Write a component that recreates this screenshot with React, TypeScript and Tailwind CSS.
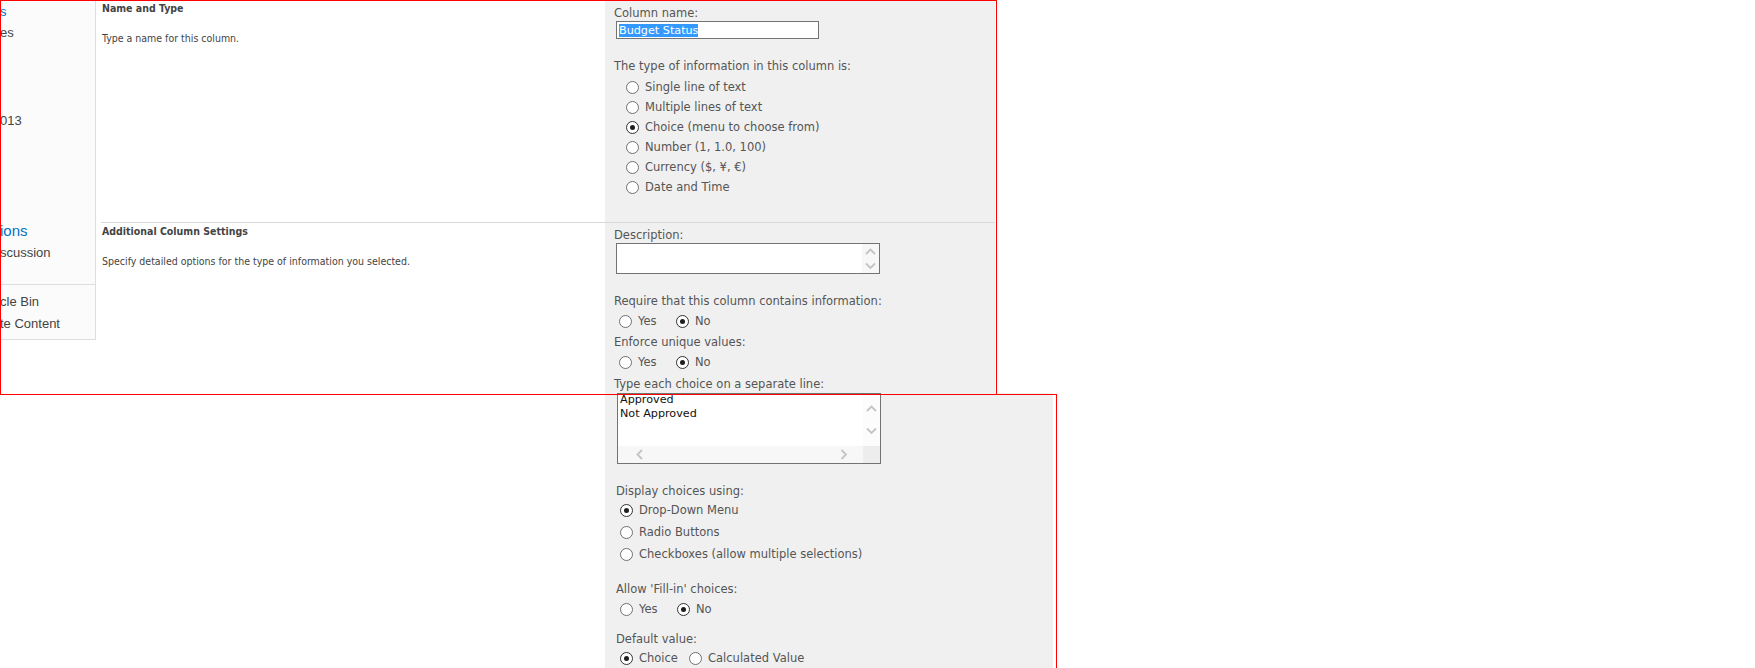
import React from 'react';

const label = "font-['DejaVu_Sans',sans-serif] text-[11.5px] leading-[14px] text-[#555]";
const tahoma = "font-['DejaVu_Sans_Condensed','Liberation_Sans',sans-serif]";

const Radio = ({ checked }: { checked?: boolean }) => (
  <span
    className={
      checked
        ? 'flex h-[13px] w-[13px] shrink-0 items-center justify-center rounded-full border border-[#333] bg-white'
        : 'flex h-[13px] w-[13px] shrink-0 items-center justify-center rounded-full border border-[#707070] bg-white'
    }
  >
    {checked && <span className="h-[5px] w-[5px] rounded-full bg-[#1e1e1e]" />}
  </span>
);

const Chevron = ({ dir }: { dir: 'up' | 'down' | 'left' | 'right' }) => {
  const d = {
    up: 'M1 6 L5.5 1.5 L10 6',
    down: 'M1 1.5 L5.5 6 L10 1.5',
    left: 'M6 1 L1.5 5.5 L6 10',
    right: 'M1.5 1 L6 5.5 L1.5 10',
  }[dir];
  const vertical = dir === 'up' || dir === 'down';
  return (
    <svg width={vertical ? 11 : 8} height={vertical ? 8 : 11} viewBox={vertical ? '0 0 11 8' : '0 0 8 11'}>
      <path d={d} stroke="#c4c4c4" strokeWidth="1.8" fill="none" />
    </svg>
  );
};

// one radio with its text
const Option = ({ text, checked, width }: { text: string; checked?: boolean; width?: string }) => (
  <div className={`flex items-center gap-[6px] ${width ?? ''}`}>
    <Radio checked={checked} />
    <span className={label}>{text}</span>
  </div>
);

const typeOptions = [
  'Single line of text',
  'Multiple lines of text',
  'Choice (menu to choose from)',
  'Number (1, 1.0, 100)',
  'Currency ($, ¥, €)',
  'Date and Time',
];

const NavPanel = () => (
  <div className="flex h-[340px] w-[96px] shrink-0 flex-col overflow-hidden border-r border-b border-[#dedede] bg-[#fbfbfb] font-['Liberation_Sans',sans-serif] text-[13px] leading-[16px] text-[#444]">
    <div className="mt-[4px] text-[#0072c6]">s</div>
    <div className="mt-[5px]">es</div>
    <div className="mt-[72px]">013</div>
    <div className="mt-[93px] text-[15px] leading-[18px] text-[#0072c6]">ions</div>
    <div className="mt-[5px]">scussion</div>
    <div className="mt-[23px] h-px w-full bg-[#dedede]" />
    <div className="mt-[9px]">cle Bin</div>
    <div className="mt-[6px]">te Content</div>
  </div>
);

const DescriptionBox = () => (
  <div className="ml-[2px] mt-[1px] flex h-[31px] w-[264px] border border-[#737373] bg-white">
    <div className="flex-1" />
    <div className="flex w-[17px] flex-col items-center justify-center gap-[6px] bg-[#f7f7f7]">
      <Chevron dir="up" />
      <Chevron dir="down" />
    </div>
  </div>
);

const ChoicesBox = () => (
  <div className="ml-[12px] flex h-[71px] w-[264px] flex-col border border-[#737373] bg-white">
    <div className="flex flex-1">
      <div className="-mt-[1px] flex-1 pl-[2px] font-['DejaVu_Sans',sans-serif] text-[11.2px] leading-[14px] text-[#111]">
        <div>Approved</div>
        <div>Not Approved</div>
      </div>
      <div className="flex w-[17px] flex-col items-center justify-center gap-[14px] bg-[#fcfcfc]">
        <Chevron dir="up" />
        <Chevron dir="down" />
      </div>
    </div>
    <div className="flex h-[17px]">
      <div className="flex flex-1 items-center justify-between bg-[#f7f7f7] pl-[18px] pr-[15px]">
        <Chevron dir="left" />
        <Chevron dir="right" />
      </div>
      <div className="w-[17px] bg-[#ededed]" />
    </div>
  </div>
);

export default function App() {
  return (
    <div className="relative min-h-[668px] w-[1755px] overflow-hidden bg-white">
      {/* first capture */}
      <div className="flex h-[393px] overflow-hidden">
        <NavPanel />
        <div className="ml-[5px] flex w-[894px] flex-col">
          {/* Name and Type */}
          <div className="flex h-[223px] border-b border-[#d8d8d8]">
            <div className={`w-[504px] pl-[1px] ${tahoma} text-[10.5px] leading-[14px] text-[#444]`}>
              <div className="mt-[1px] font-bold">Name and Type</div>
              <div className="mt-[16px]">Type a name for this column.</div>
            </div>
            <div className="flex w-[390px] flex-col bg-[#f0f0f0] pl-[9px]">
              <div className={`mt-[6px] ${label}`}>Column name:</div>
              <div className="ml-[2px] mt-[1px] flex h-[18px] w-[203px] items-center border border-[#737373] bg-white pl-[2px]">
                <span className="bg-[#3399ff] font-['DejaVu_Sans',sans-serif] text-[11.2px] leading-[13px] text-white">
                  Budget Status
                </span>
              </div>
              <div className={`mt-[20px] ${label}`}>The type of information in this column is:</div>
              <div className="mt-[4px] flex flex-col pl-[12px]">
                {typeOptions.map((t, i) => (
                  <div key={t} className="flex h-[20px] items-center">
                    <Option text={t} checked={i === 2} />
                  </div>
                ))}
              </div>
            </div>
          </div>
          {/* Additional Column Settings */}
          <div className="flex flex-1">
            <div className={`w-[504px] pl-[1px] ${tahoma} text-[10.5px] leading-[14px] text-[#444]`}>
              <div className="mt-[1px] font-bold">Additional Column Settings</div>
              <div className="mt-[16px]">Specify detailed options for the type of information you selected.</div>
            </div>
            <div className="flex w-[390px] flex-col bg-[#f0f0f0] pl-[9px]">
              <div className={`mt-[5px] ${label}`}>Description:</div>
              <DescriptionBox />
              <div className={`mt-[20px] ${label}`}>Require that this column contains information:</div>
              <div className="ml-[5px] mt-[3px] flex h-[20px] items-center">
                <Option text="Yes" width="w-[57px]" />
                <Option text="No" checked />
              </div>
              <div className={`mt-[4px] ${label}`}>Enforce unique values:</div>
              <div className="ml-[5px] mt-[3px] flex h-[20px] items-center">
                <Option text="Yes" width="w-[57px]" />
                <Option text="No" checked />
              </div>
              <div className={`mt-[5px] ${label}`}>Type each choice on a separate line:</div>
            </div>
          </div>
        </div>
      </div>

      {/* second capture */}
      <div className="flex h-[290px]">
        <div className="w-[605px] shrink-0" />
        <div className="flex w-[448px] flex-col bg-[#f0f0f0]">
          <ChoicesBox />
          <div className="flex flex-col pl-[11px]">
            <div className={`mt-[20px] ${label}`}>Display choices using:</div>
            <div className="mt-[1px] flex flex-col pl-[4px]">
              <div className="flex h-[22px] items-center">
                <Option text="Drop-Down Menu" checked />
              </div>
              <div className="flex h-[22px] items-center">
                <Option text="Radio Buttons" />
              </div>
              <div className="flex h-[22px] items-center">
                <Option text="Checkboxes (allow multiple selections)" />
              </div>
            </div>
            <div className={`mt-[17px] ${label}`}>Allow 'Fill-in' choices:</div>
            <div className="ml-[4px] mt-[3px] flex h-[20px] items-center">
              <Option text="Yes" width="w-[57px]" />
              <Option text="No" checked />
            </div>
            <div className={`mt-[13px] ${label}`}>Default value:</div>
            <div className="ml-[4px] mt-[2px] flex h-[20px] items-center">
              <Option text="Choice" checked width="w-[69px]" />
              <Option text="Calculated Value" />
            </div>
          </div>
        </div>
      </div>

      {/* red highlight frames */}
      <div className="pointer-events-none absolute left-0 top-0 h-[395px] w-[997px] border border-[#ff0000]" />
      <div className="pointer-events-none absolute left-[605px] top-[394px] h-[300px] w-[452px] border-t border-r border-[#ff0000]" />
    </div>
  );
}
